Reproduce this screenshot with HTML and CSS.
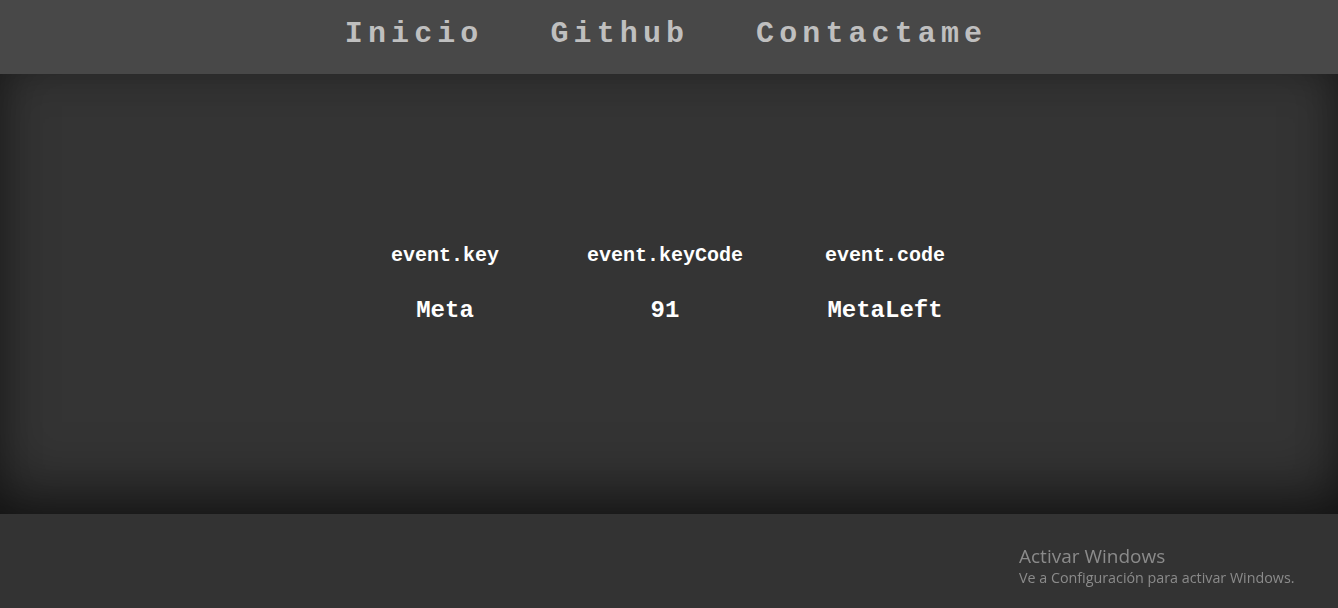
FILE: index.html
```html
<!DOCTYPE html>
<html lang="es">
<head>
<meta charset="utf-8">
<title>Keycode</title>
<link rel="stylesheet" href="styles.css">
</head>
<body>
<header class="topbar">
  <nav class="nav">
    <a class="nav-link" href="#">Inicio</a>
    <a class="nav-link" href="#">Github</a>
    <a class="nav-link" href="#">Contactame</a>
  </nav>
</header>
<main class="stage">
  <div class="keytable">
    <div class="cell head">event.key</div>
    <div class="cell head">event.keyCode</div>
    <div class="cell head">event.code</div>
    <div class="cell val">Meta</div>
    <div class="cell val">91</div>
    <div class="cell val">MetaLeft</div>
  </div>
</main>
<footer class="bottom"></footer>
<div class="watermark">
  <div class="wm-title">Activar Windows</div>
  <div class="wm-sub">Ve a Configuración para activar Windows.</div>
</div>
</body>
</html>
```

FILE: styles.css
```css
html, body {
  margin: 0;
  padding: 0;
  height: 100%;
}
body {
  background: #333333;
  font-family: "Courier New", "Liberation Mono", monospace;
  overflow: hidden;
}
.topbar {
  height: 74px;
  background: #484848;
  display: flex;
  align-items: center;
  justify-content: center;
}
.nav {
  display: flex;
  gap: 67px;
  padding-right: 6px;
  padding-bottom: 6px;
}
.nav-link {
  color: #bfbfbf;
  text-decoration: none;
  font-weight: bold;
  font-size: 30px;
  letter-spacing: 5.1px;
}
.stage {
  height: 440px;
  background: #343434;
  box-shadow: inset 0 -30px 60px -10px rgba(0,0,0,0.55), inset 0 0 40px rgba(0,0,0,0.25);
  display: flex;
  justify-content: center;
  padding-top: 166px;
  box-sizing: border-box;
}
.keytable {
  display: grid;
  grid-template-columns: repeat(3, 220px);
  grid-template-rows: 30px 60px;
  align-items: center;
  margin-right: 8px;
  color: #ffffff;
  font-weight: bold;
  text-align: center;
}
.head {
  font-size: 20px;
}
.val {
  font-size: 24px;
  padding-top: 20px;
}
.bottom {
  height: 94px;
  background: #333333;
}
.watermark {
  position: fixed;
  left: 1019px;
  top: 543px;
  font-family: "Open Sans", "Noto Sans", sans-serif;
  color: #8b8b8b;
}
.wm-title {
  font-size: 19px;
  line-height: 26px;
}
.wm-sub {
  font-size: 14.3px;
  line-height: 18px;
}
```
